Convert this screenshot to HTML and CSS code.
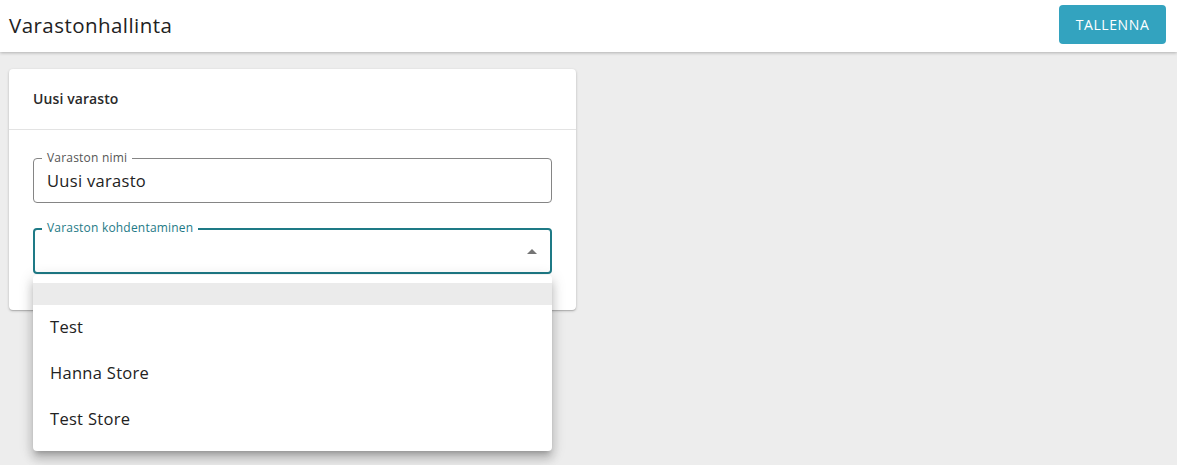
FILE: index.html
```html
<!DOCTYPE html>
<html lang="fi">
<head>
<meta charset="utf-8">
<title>Varastonhallinta</title>
<link rel="stylesheet" href="styles.css">
</head>
<body>
<header class="topbar">
  <h1 class="title">Varastonhallinta</h1>
  <button class="save-btn" type="button">Tallenna</button>
</header>
<main class="content">
  <section class="card">
    <div class="card-head">Uusi varasto</div>
    <div class="card-body">
      <div class="field">
        <span class="field-label">Varaston nimi</span>
        <span class="field-value">Uusi varasto</span>
      </div>
      <div class="field field-focused">
        <span class="field-label">Varaston kohdentaminen</span>
        <span class="field-value"></span>
        <span class="arrow"></span>
        <ul class="menu">
          <li class="menu-item menu-item-empty"></li>
          <li class="menu-item">Test</li>
          <li class="menu-item">Hanna Store</li>
          <li class="menu-item">Test Store</li>
        </ul>
      </div>
    </div>
  </section>
</main>
</body>
</html>
```
FILE: styles.css
```css
* { box-sizing: border-box; }
html, body { margin: 0; padding: 0; }
body {
  background: #ededed;
  font-family: "Open Sans", "DejaVu Sans", sans-serif;
  color: #212121;
  height: 465px;
  overflow: hidden;
}
.topbar {
  height: 52px;
  background: #fff;
  box-shadow: 0 1px 3px rgba(0,0,0,0.25);
  display: flex;
  align-items: center;
  justify-content: space-between;
  padding: 0 11px 0 9px;
  position: relative;
  z-index: 2;
}
.title {
  margin: -3px 0 0;
  font-size: 20.5px;
  font-weight: 500;
  letter-spacing: 0.45px;
  color: #222;
}
.save-btn {
  width: 107px;
  height: 39px;
  margin-top: -3px;
  border: 0;
  border-radius: 4px;
  background: #33a3bf;
  color: #fff;
  font-family: inherit;
  font-size: 14px;
  text-transform: uppercase;
  letter-spacing: 0.6px;
}
.content {
  padding: 17px 9px;
}
.card {
  width: 567px;
  background: #fff;
  border-radius: 4px;
  box-shadow: 0 1px 3px rgba(0,0,0,0.2), 0 1px 1px rgba(0,0,0,0.14);
}
.card-head {
  height: 61px;
  padding: 0 24px 1px;
  display: flex;
  align-items: center;
  font-size: 14px;
  font-weight: 600;
  letter-spacing: 0.1px;
  color: #2a2a2a;
  border-bottom: 1px solid #e3e3e3;
}
.card-body {
  padding: 28px 24px 36px;
  display: flex;
  flex-direction: column;
  gap: 25px;
}
.field {
  position: relative;
  height: 45px;
  border: 1px solid #858585;
  border-radius: 4px;
  display: flex;
  align-items: center;
  padding: 0 13px 1px;
}
.field-focused {
  height: 46px;
  border: 2px solid #1e7a86;
  padding: 0 12px;
}
.field-label {
  position: absolute;
  top: -9px;
  left: 8px;
  padding: 0 5px;
  background: #fff;
  font-size: 12px;
  line-height: 15px;
  letter-spacing: 0.2px;
  color: #555;
}
.field-focused .field-label {
  top: -10px;
  left: 7px;
  color: #1e7a86;
}
.field-value {
  font-size: 16.5px;
  letter-spacing: 0.3px;
  color: #222;
}
.arrow {
  position: absolute;
  right: 13px;
  top: 19px;
  width: 0;
  height: 0;
  border-left: 5px solid transparent;
  border-right: 5px solid transparent;
  border-bottom: 5px solid #757575;
}
.menu {
  position: absolute;
  top: 45px;
  left: -2px;
  width: 519px;
  margin: 0;
  padding: 8px 0;
  list-style: none;
  background: #fff;
  border-radius: 4px;
  box-shadow: 0 5px 5px -3px rgba(0,0,0,0.2), 0 8px 10px 1px rgba(0,0,0,0.14), 0 3px 14px 2px rgba(0,0,0,0.12);
  z-index: 5;
}
.menu-item {
  height: 46px;
  padding: 0 17px 3px;
  display: flex;
  align-items: center;
  font-size: 16.5px;
  letter-spacing: 0.3px;
  color: #222;
}
.menu-item-empty {
  height: 22px;
  padding: 0;
  background: #ebebeb;
}
```
